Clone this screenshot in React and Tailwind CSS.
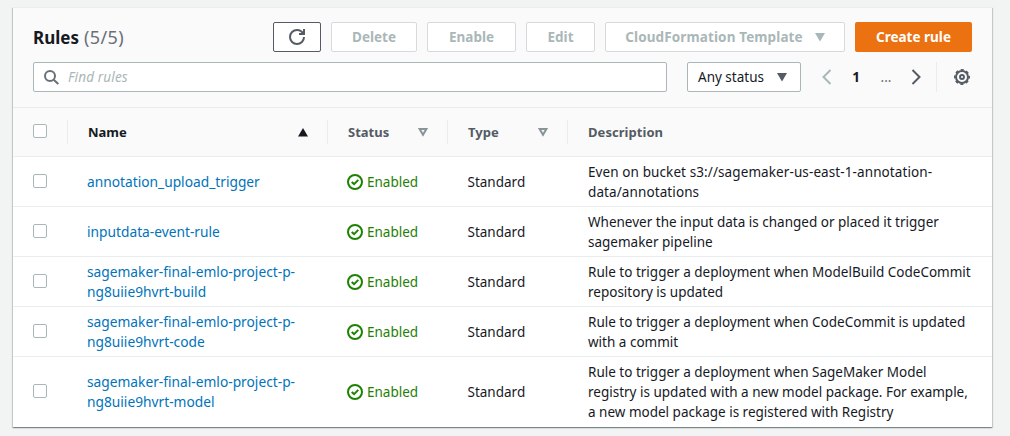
const rules = [
  { name: "annotation_upload_trigger", description: "Even on bucket s3://sagemaker-us-east-1-annotation-\ndata/annotations", tracking: "tracking-[0.1px]" },
  { name: "inputdata-event-rule", description: "Whenever the input data is changed or placed it trigger\nsagemaker pipeline" },
  { name: "sagemaker-final-emlo-project-p-\nng8uiie9hvrt-build", description: "Rule to trigger a deployment when ModelBuild CodeCommit\nrepository is updated" },
  { name: "sagemaker-final-emlo-project-p-\nng8uiie9hvrt-code", description: "Rule to trigger a deployment when CodeCommit is updated\nwith a commit" },
  { name: "sagemaker-final-emlo-project-p-\nng8uiie9hvrt-model", description: "Rule to trigger a deployment when SageMaker Model\nregistry is updated with a new model package. For example,\na new model package is registered with Registry" },
];

const columns = "grid grid-cols-[55px_260px_120px_120px_1fr]";

function Caret({ up = false, className = "" }) {
  return (
    <svg viewBox="0 0 10 9" className={`h-[9px] w-[10px] shrink-0 ${className}`} fill="currentColor">
      {up ? <path d="M5 0L10 8.5H0z" /> : <path d="M0 0h10L5 8.6z" />}
    </svg>
  );
}

function SortCaret() {
  return (
    <svg viewBox="0 0 10 9" className="h-[9px] w-[10px] shrink-0 text-[#879596]" fill="none" stroke="currentColor" strokeWidth="2">
      <path d="M1.6 1h6.8L5 6.8z" />
    </svg>
  );
}

function Checkbox({ className = "" }) {
  return <span className={`ml-5 block h-[14px] w-[14px] rounded-[2px] border border-[#aab7b8] bg-white ${className}`} />;
}

function DisabledButton({ children, className }) {
  return (
    <button className={`flex h-[30px] items-center justify-center rounded-[2px] border border-[#d5dbdb] bg-white text-[13.5px] font-bold whitespace-nowrap text-[#aab7b8] ${className}`}>
      {children}
    </button>
  );
}

function HeaderCell({ children, icon, last = false, className = "" }) {
  return (
    <div className={`flex h-6 items-center justify-between pr-[19px] pl-5 text-[13px] font-bold ${last ? "tracking-[0.05px]" : "border-r border-[#eaeded]"} ${className}`}>
      <span>{children}</span>
      {icon}
    </div>
  );
}

function RefreshIcon() {
  return (
    <svg viewBox="0 0 16 16" className="h-4 w-4" fill="none" stroke="#545b64" strokeWidth="2">
      <path d="M15 8c0 3.87-3.13 7-7 7s-7-3.13-7-7 3.13-7 7-7c2.79 0 5.2 1.63 6.33 4" />
      <path d="M10 5h5V0" />
    </svg>
  );
}

function GearIcon() {
  return (
    <svg viewBox="0 0 16 16" className="h-4 w-4" fill="none" stroke="#545b64">
      <circle cx="8" cy="8" r="6" strokeWidth="2" />
      <circle cx="8" cy="8" r="7.2" strokeWidth="1.6" strokeDasharray="3.1 2.555" strokeDashoffset="1.55" />
      <circle cx="8" cy="8" r="2" strokeWidth="1.9" />
    </svg>
  );
}

function Enabled() {
  return (
    <div className="flex items-center gap-1 text-[#1d8102]">
      <svg viewBox="0 0 16 16" className="h-4 w-4 shrink-0" fill="none" stroke="currentColor" strokeWidth="2">
        <circle cx="8" cy="8" r="7" />
        <path d="M4.7 7.9l2.4 2.2 4.2-4.2" />
      </svg>
      <span>Enabled</span>
    </div>
  );
}

export default function App() {
  return (
    <div className="h-[436px] w-[1010px] overflow-hidden bg-[#f2f3f3] pt-[7px] pl-[13px] font-['Noto_Sans',sans-serif] text-[13.5px] leading-5 text-[#16191f]">
      <div className="h-[420px] w-[979px] border-t border-[#eaeded] bg-white shadow-[0_1px_1px_0_rgba(0,28,36,0.3),1px_1px_1px_0_rgba(0,28,36,0.15),-1px_1px_1px_0_rgba(0,28,36,0.15)]">
        <div className="flex h-[100px] flex-col gap-[10px] border-b border-[#eaeded] bg-[#fafafa] pt-[14px] pr-5 pl-5">
          <div className="flex h-[30px] items-center">
            <h2 className="flex items-baseline gap-[5px] font-bold">
              <span className="text-[17px]">Rules</span>
              <span className="text-[18px] font-normal tracking-[0.4px] text-[#687078]">(5/5)</span>
            </h2>
            <div className="ml-auto flex gap-[10px]">
              <button className="flex h-[30px] w-12 items-center justify-center rounded-[2px] border border-[#545b64] bg-white">
                <RefreshIcon />
              </button>
              <DisabledButton className="w-[86px]">Delete</DisabledButton>
              <DisabledButton className="w-[89px]">Enable</DisabledButton>
              <DisabledButton className="w-[69px]">Edit</DisabledButton>
              <DisabledButton className="w-[240px] gap-3 tracking-[0.12px]">
                CloudFormation Template
                <Caret />
              </DisabledButton>
              <button className="h-[30px] w-[117px] rounded-[2px] bg-[#ec7211] text-[13.5px] font-bold text-white">Create rule</button>
            </div>
          </div>
          <div className="flex h-[30px] items-center">
            <div className="flex h-[30px] w-[634px] items-center rounded-[2px] border border-[#aab7b8] bg-white pl-[9px]">
              <svg viewBox="0 0 16 16" className="h-4 w-4" fill="none" stroke="#687078" strokeWidth="2">
                <circle cx="7" cy="7" r="5" />
                <path d="M10.7 10.7l4.6 4.3" />
              </svg>
              <span className="ml-[9px] text-[13.5px] tracking-[0.15px] text-[#aab7b8] italic">Find rules</span>
            </div>
            <button className="ml-5 flex h-[30px] w-[114px] items-center justify-between rounded-[2px] border border-[#aab7b8] bg-white pr-[13px] pl-[10px] whitespace-nowrap">
              Any status
              <Caret className="text-[#545b64]" />
            </button>
            <svg viewBox="0 0 10 16" className="ml-[21px] h-4 w-[10px]" fill="none" stroke="#aab7b8" strokeWidth="2">
              <path d="M8.5 1L1.5 8l7 7" />
            </svg>
            <span className="ml-5 w-2 text-center font-bold">1</span>
            <span className="ml-5 w-3 text-center text-[#687078]">...</span>
            <svg viewBox="0 0 10 16" className="ml-[19px] h-4 w-[10px]" fill="none" stroke="#545b64" strokeWidth="2">
              <path d="M1.5 1l7 7-7 7" />
            </svg>
            <div className="ml-auto flex h-[30px] items-center border-l border-[#eaeded] pr-[2px] pl-[17px]">
              <GearIcon />
            </div>
          </div>
        </div>

        <div className={`${columns} h-[49px] items-center border-b border-[#eaeded] bg-[#fafafa] text-[#545b64]`}>
          <div className="h-6 border-r border-[#eaeded] pt-1">
            <Checkbox />
          </div>
          <HeaderCell className="text-[#16191f]" icon={<Caret up />}>Name</HeaderCell>
          <HeaderCell icon={<SortCaret />}>Status</HeaderCell>
          <HeaderCell icon={<SortCaret />}>Type</HeaderCell>
          <HeaderCell last>Description</HeaderCell>
        </div>

        {rules.map((rule) => (
          <div key={rule.name} className={`${columns} items-center border-b border-[#eaeded] pt-[5px] pb-1 last:border-b-0`}>
            <Checkbox className="-mt-[2px]" />
            <div className="pl-[19px] text-[13.75px] whitespace-pre text-[#0073bb]">{rule.name}</div>
            <div className="pl-[19px]">
              <Enabled />
            </div>
            <div className="pl-[19.5px]">Standard</div>
            <div className={`pl-5 whitespace-pre ${rule.tracking ?? ""}`}>{rule.description}</div>
          </div>
        ))}
      </div>
    </div>
  );
}
